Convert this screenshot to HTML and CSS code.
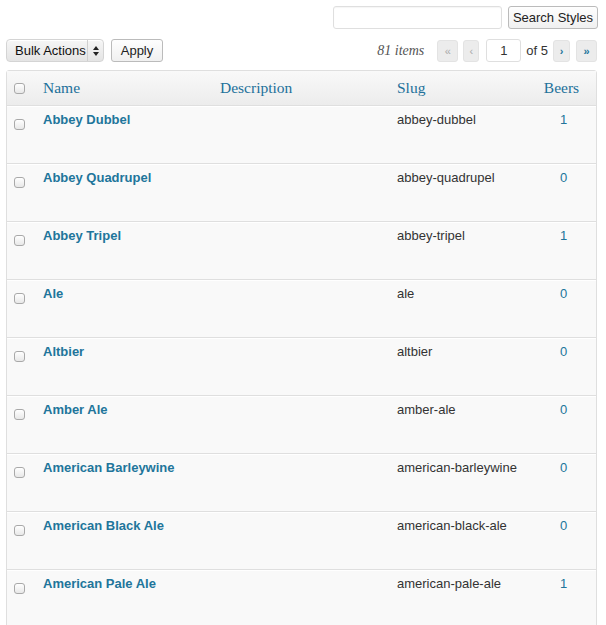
FILE: index.html
```html
<!DOCTYPE html>
<html>
<head>
<meta charset="utf-8">
<link rel="stylesheet" href="styles.css">
</head>
<body>
<div class="page">
  <div class="search-box">
    <input class="search-input" type="text">
    <button class="btn">Search Styles</button>
  </div>
  <div class="tablenav">
    <div class="actions">
      <div class="select">
        <span class="select-label">Bulk Actions</span>
        <span class="select-arrows"><svg width="6" height="10" viewBox="0 0 6 10"><path d="M3 0 L6 4 L0 4 Z M0 6 L6 6 L3 10 Z" fill="#222"/></svg></span>
      </div>
      <button class="btn btn-apply">Apply</button>
    </div>
    <div class="pages">
      <span class="count">81 items</span>
      <span class="pg pg-wide disabled">&laquo;</span>
      <span class="pg pg-narrow disabled">&lsaquo;</span>
      <input class="pg-input" type="text" value="1">
      <span class="of">of 5</span>
      <span class="pg pg-mid">&rsaquo;</span>
      <span class="pg pg-wide">&raquo;</span>
    </div>
  </div>
  <table class="list">
    <colgroup>
      <col class="c-cb"><col class="c-name"><col class="c-desc"><col class="c-slug"><col class="c-posts">
    </colgroup>
    <thead>
      <tr>
        <th class="cb"><span class="box"></span></th>
        <th>Name</th>
        <th>Description</th>
        <th>Slug</th>
        <th class="posts">Beers</th>
      </tr>
    </thead>
    <tbody>
      <tr><td class="cb"><span class="box"></span></td><td class="name">Abbey Dubbel</td><td></td><td class="slug">abbey-dubbel</td><td class="posts">1</td></tr>
      <tr><td class="cb"><span class="box"></span></td><td class="name">Abbey Quadrupel</td><td></td><td class="slug">abbey-quadrupel</td><td class="posts">0</td></tr>
      <tr><td class="cb"><span class="box"></span></td><td class="name">Abbey Tripel</td><td></td><td class="slug">abbey-tripel</td><td class="posts">1</td></tr>
      <tr><td class="cb"><span class="box"></span></td><td class="name">Ale</td><td></td><td class="slug">ale</td><td class="posts">0</td></tr>
      <tr><td class="cb"><span class="box"></span></td><td class="name">Altbier</td><td></td><td class="slug">altbier</td><td class="posts">0</td></tr>
      <tr><td class="cb"><span class="box"></span></td><td class="name">Amber Ale</td><td></td><td class="slug">amber-ale</td><td class="posts">0</td></tr>
      <tr><td class="cb"><span class="box"></span></td><td class="name">American Barleywine</td><td></td><td class="slug">american-barleywine</td><td class="posts">0</td></tr>
      <tr><td class="cb"><span class="box"></span></td><td class="name">American Black Ale</td><td></td><td class="slug">american-black-ale</td><td class="posts">0</td></tr>
      <tr><td class="cb"><span class="box"></span></td><td class="name">American Pale Ale</td><td></td><td class="slug">american-pale-ale</td><td class="posts">1</td></tr>
    </tbody>
  </table>
</div>
</body>
</html>
```
FILE: styles.css
```css
* { box-sizing: border-box; }
html, body { margin: 0; background: #fff; }
body {
  font-family: "Liberation Sans", Arial, sans-serif;
  font-size: 13px;
  color: #333;
}
.page { padding: 6px 8px 0 6px; }

.search-box {
  display: flex;
  justify-content: flex-end;
  gap: 6px;
  height: 23px;
}
.search-input {
  width: 169px;
  height: 23px;
  border: 1px solid #dfdfdf;
  border-radius: 3px;
  background: #fff;
  margin: 0;
  padding: 0 4px;
  box-shadow: inset 0 1px 1px rgba(0,0,0,0.04);
}
.btn {
  font-family: "Liberation Sans", Arial, sans-serif;
  font-size: 13px;
  color: #222;
  height: 23px;
  margin: 0;
  padding: 0 9px;
  border: 1px solid #bbb;
  border-radius: 3px;
  background: linear-gradient(#fefefe, #f0f0f0);
  line-height: 21px;
}
.search-box .btn { width: 90px; padding: 0; }

.tablenav {
  display: flex;
  justify-content: space-between;
  align-items: center;
  margin-top: 10px;
  height: 23px;
  padding-right: 1px;
}
.actions { display: flex; gap: 7px; align-items: center; }
.select {
  display: flex;
  align-items: stretch;
  width: 98px;
  height: 23px;
  border: 1px solid #d4d4d4;
  border-radius: 4px;
  background: linear-gradient(#f6f6f6, #e4e4e4);
  box-shadow: inset 0 1px 0 #fff;
}
.select-label {
  flex: 1;
  padding-left: 8px;
  line-height: 21px;
  color: #111;
  white-space: nowrap;
}
.select-arrows {
  width: 16px;
  border-left: 1px solid #cfcfcf;
  display: flex;
  align-items: center;
  justify-content: center;
}
.btn-apply { width: 52px; padding: 0; }

.pages { display: flex; align-items: center; height: 23px; }
.count {
  font-family: "Liberation Serif", Georgia, serif;
  font-style: italic;
  font-size: 14px;
  color: #555;
  margin-right: 13px;
}
.pg {
  display: inline-flex;
  align-items: center;
  justify-content: center;
  height: 22px;
  border: 1px solid #e3e3e3;
  border-radius: 3px;
  background: #ececec;
  color: #21759b;
  font-size: 11px;
  font-weight: bold;
}
.pg.disabled { color: #aaa; font-weight: normal; }
.pg-wide { width: 21px; }
.pg-narrow { width: 16px; margin-left: 5px; }
.pg-mid { width: 17px; margin-left: 5px; margin-right: 6px; }
.pg-input {
  width: 35px;
  height: 23px;
  margin: 0 0 0 7px;
  border: 1px solid #dfdfdf;
  border-radius: 3px;
  background: #fff;
  font-family: "Liberation Sans", Arial, sans-serif;
  font-size: 13px;
  color: #333;
  text-align: center;
  padding: 0;
}
.of { margin-left: 5px; color: #333; }

.list {
  margin-top: 8px;
  width: 591px;
  table-layout: fixed;
  border-spacing: 0;
  border: 1px solid #dfdfdf;
  border-radius: 3px;
  background: #f9f9f9;
}
.c-cb { width: 28px; }
.c-name { width: 177px; }
.c-desc { width: 177px; }
.c-slug { width: 140px; }
.c-posts { width: 67px; }

.list th {
  height: 35px;
  padding: 0 8px;
  text-align: left;
  font-family: "Liberation Serif", Georgia, serif;
  font-size: 15.5px;
  font-weight: normal;
  color: #22709a;
  background: linear-gradient(#f9f9f9, #ececec);
  border-bottom: 1px solid #dfdfdf;
  vertical-align: middle;
}
.list th.cb { padding: 1px 0 0 7px; }
.list th.posts { text-align: center; padding: 0 2px 0 0; }

.list td {
  height: 58px;
  padding: 4px 8px 0;
  vertical-align: top;
  line-height: 18px;
  border-top: 1px solid #fff;
  border-bottom: 1px solid #dfdfdf;
}
.list tbody tr:last-child td { border-bottom: none; }
.list td.cb { padding: 12px 0 0 7px; }
.list td.name { font-weight: bold; color: #21759b; }
.list td.slug { color: #333; }
.list td.posts { text-align: center; color: #21759b; padding: 4px 0 0 2px; }

.box {
  display: block;
  width: 11px;
  height: 11px;
  border: 1px solid #a9a9a9;
  border-radius: 3px;
  background: linear-gradient(#fff, #e8e8e8);
}
```
